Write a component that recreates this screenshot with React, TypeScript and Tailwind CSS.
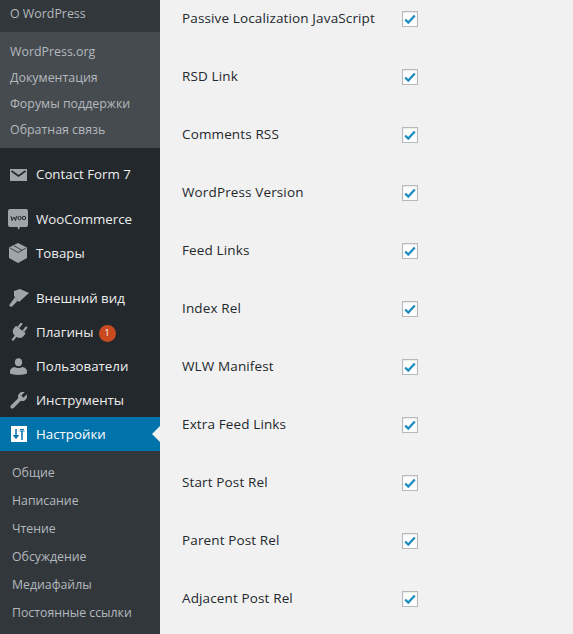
import type { ReactNode } from 'react'

const fieldNames = [
  'Passive Localization JavaScript',
  'RSD Link',
  'Comments RSS',
  'WordPress Version',
  'Feed Links',
  'Index Rel',
  'WLW Manifest',
  'Extra Feed Links',
  'Start Post Rel',
  'Parent Post Rel',
  'Adjacent Post Rel',
]

const aboutLinks = ['WordPress.org', 'Документация', 'Форумы поддержки', 'Обратная связь']
const settingsLinks = ['Общие', 'Написание', 'Чтение', 'Обсуждение', 'Медиафайлы', 'Постоянные ссылки']

const MailIcon = () => (
  <svg viewBox="0 0 17 12" className="ml-[2px] translate-y-px w-[17px] h-3">
    <rect width="17" height="12" fill="#a0a5aa" />
    <path d="M1.500 2 8.500 7l7-5" fill="none" stroke="#23282d" strokeWidth="1.600" />
  </svg>
)

const WooIcon = () => (
  <svg viewBox="0 0 20 21" className="w-5 h-[21px]">
    <path d="M2 0h16a2 2 0 0 1 2 2v14a2 2 0 0 1-2 2h-6l-1.500 3-1-3H2a2 2 0 0 1-2-2V2a2 2 0 0 1 2-2z" fill="#a0a5aa" />
    <path d="M3 7l1 4.500L6 8l1.500 3.500 1-4.500" fill="none" stroke="#23282d" strokeWidth="1" />
    <circle cx="11.500" cy="9" r="1.700" fill="none" stroke="#23282d" strokeWidth="1" />
    <circle cx="16" cy="9" r="1.700" fill="none" stroke="#23282d" strokeWidth="1" />
  </svg>
)

const BoxIcon = () => (
  <svg viewBox="0 0 18 20" className="ml-px w-[18px] h-5" fill="#a0a5aa">
    <path d="M9 0l9 4.500v10.500l-9 5-9-5V4.500z" />
    <path d="M1 5l8 4.500L17 5M5 2.800l8 4.400" fill="none" stroke="#23282d" strokeWidth="0.800" />
  </svg>
)

const BrushIcon = () => (
  <svg viewBox="0 0 20 18" className="ml-px w-5 h-[18px]" fill="#a0a5aa">
    <path d="M5 2l6-2 9 4-10 9-5-6z" />
    <path d="M6 8l3 3.500L2.500 18 0 16.500z" />
  </svg>
)

const PluginIcon = () => (
  <svg viewBox="0 0 20 20" className="ml-px w-[19px] h-[19px]" fill="#a0a5aa">
    <g transform="rotate(38 10 10)">
      <rect x="5.500" y="0" width="2.400" height="6" />
      <rect x="12" y="0" width="2.400" height="6" />
      <path d="M3.500 6h13v3.500c0 3.500-2.800 5.500-6.500 5.500s-6.500-2-6.500-5.500z" />
      <rect x="8.800" y="14" width="2.400" height="6.500" />
    </g>
  </svg>
)

const UserIcon = () => (
  <svg viewBox="0 0 18 18" className="ml-[2px] w-[17px] h-[17px]" fill="#a0a5aa">
    <ellipse cx="9" cy="4.500" rx="3.800" ry="4.300" />
    <path d="M5 9.500c1 .8 2.500 1.200 4 1.200s3-.4 4-1.200c3 .5 5 2 5 4.500v2.500c-2 1-5 1.500-9 1.500s-7-.5-9-1.500V14c0-2.500 2-4 5-4.500z" />
  </svg>
)

const WrenchIcon = () => (
  <svg viewBox="0 0 20 20" className="ml-px w-[19px] h-[19px]" fill="#a0a5aa">
    <path d="M19 5.500c0 2.800-2.200 5-5 5-.6 0-1.100-.1-1.600-.3L5 17.800c-.8.900-2.200 1-3 .2s-.8-2.200.1-3l7.600-7.500c-.2-.5-.2-1-.2-1.500 0-2.800 2.200-5 5-5 .7 0 1.300.1 1.900.4L13 4.800 15 7l3.600-3.400c.3.600.4 1.200.4 1.900z" />
  </svg>
)

const SlidersIcon = () => (
  <svg viewBox="0 0 16 16" className="ml-[2px] w-4 h-4">
    <rect width="16" height="16" fill="#fff" />
    <path d="M5 3v9M11 5v9" stroke="#0073aa" strokeWidth="1.500" fill="none" />
    <path d="M2.500 9.500h5L5 12.500zM8.500 5h5M9 3.500h4" stroke="#0073aa" strokeWidth="1" fill="#0073aa" />
  </svg>
)

function MenuItem({ icon, label, badge }: { icon: ReactNode; label: string; badge?: string }) {
  return (
    <div className="flex h-[34px] items-center text-[13.3px] text-[#eee]">
      <div className="w-9 pl-[8px] flex items-center">{icon}</div>
      <span className="translate-y-px">{label}</span>
      {badge && (
        <span className="ml-[5px] flex h-[17px] w-[17px] translate-y-px items-center justify-center rounded-full bg-[#ca4a1f] text-[9px] text-white">
          {badge}
        </span>
      )}
    </div>
  )
}

function SettingRow({ name }: { name: string }) {
  return (
    <div className="flex h-[58px] items-center">
      <div className="w-[220px] -translate-y-px text-[13.500px] font-medium tracking-[0.13px] text-[#23282d]">{name}</div>
      <div className="flex h-[16px] w-[16px] items-center justify-center border border-[#b4b9be] bg-white shadow-[inset_0_1px_2px_rgba(0,0,0,0.1)]">
        <svg viewBox="0 0 16 16" className="h-[14px] w-[14px]">
          <path d="M2.500 8.500 6 12l7.500-8" fill="none" stroke="#1e8cbe" strokeWidth="2.600" />
        </svg>
      </div>
    </div>
  )
}

export default function App() {
  return (
    <div className="flex h-[634px] w-[573px] overflow-hidden bg-[#f1f1f1] font-['Open_Sans',sans-serif]">
      {/* Admin menu */}
      <div className="w-[160px] shrink-0 bg-[#23282d]">
        <div className="flex h-8 items-center bg-[#32373c] pb-1 pl-[10px] text-[12.400px] text-[#b4b9be]">О WordPress</div>
        <div className="bg-[#464b50] pt-[7px] pb-[5px] pl-[10px] text-[12.400px] text-[#b4b9be]">
          {aboutLinks.map(link => (
            <div key={link} className="flex h-[26px] items-center">{link}</div>
          ))}
        </div>

        <div className="mt-[9px]">
          <MenuItem icon={<MailIcon />} label="Contact Form 7" />
        </div>
        <div className="mt-[11px]">
          <MenuItem icon={<WooIcon />} label="WooCommerce" />
          <MenuItem icon={<BoxIcon />} label="Товары" />
        </div>
        <div className="mt-[11px]">
          <MenuItem icon={<BrushIcon />} label="Внешний вид" />
          <MenuItem icon={<PluginIcon />} label="Плагины" badge="1" />
          <MenuItem icon={<UserIcon />} label="Пользователи" />
          <MenuItem icon={<WrenchIcon />} label="Инструменты" />
        </div>

        {/* Current section */}
        <div className="relative flex h-[34px] items-center bg-[#0073aa] text-[13.3px] text-white">
          <div className="w-9 pl-[9px] flex items-center"><SlidersIcon /></div>
          <span className="translate-y-px">Настройки</span>
          <div className="absolute right-0 top-[9px] h-0 w-0 border-y-[8px] border-r-[8px] border-y-transparent border-r-[#f1f1f1]" />
        </div>
        <div className="bg-[#32373c] pt-2 pb-[7px] pl-3 text-[12.300px] text-[#b4b9be]">
          {settingsLinks.map(link => (
            <div key={link} className="flex h-7 items-center">{link}</div>
          ))}
        </div>
      </div>

      {/* Settings form */}
      <div className="-mt-[10px] pl-[22px]">
        {fieldNames.map(name => (
          <SettingRow key={name} name={name} />
        ))}
      </div>
    </div>
  )
}
